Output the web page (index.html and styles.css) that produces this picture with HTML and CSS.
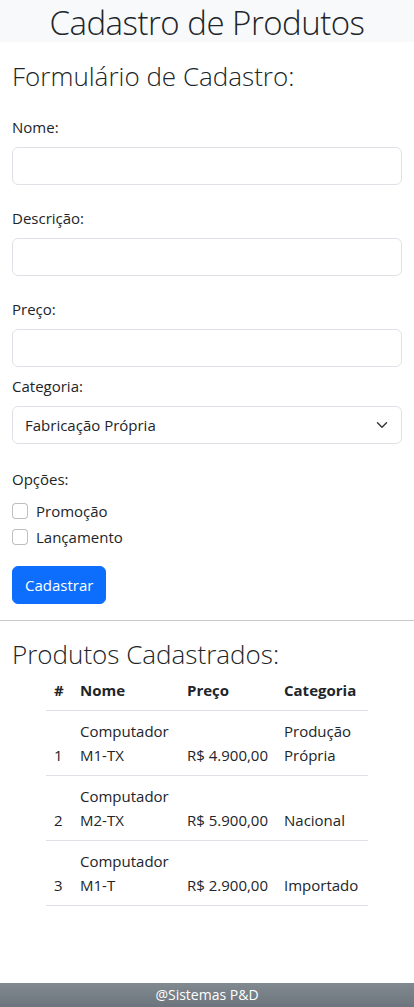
FILE: index.html
```html
<!DOCTYPE html>
<html lang="pt-BR">
<head>
<meta charset="utf-8">
<meta name="viewport" content="width=device-width, initial-scale=1">
<title>Cadastro de Produtos</title>
<link rel="stylesheet" href="styles.css">
</head>
<body>
<header class="topbar">
  <h1 class="title">Cadastro de Produtos</h1>
</header>

<main class="content">
  <h3 class="section-title form-title">Formulário de Cadastro:</h3>
  <form class="form">
    <div class="field">
      <label class="field-label" for="nome">Nome:</label>
      <input class="field-input" id="nome" type="text">
    </div>
    <div class="field">
      <label class="field-label" for="descricao">Descrição:</label>
      <input class="field-input" id="descricao" type="text">
    </div>
    <div class="field field-tight">
      <label class="field-label" for="preco">Preço:</label>
      <input class="field-input" id="preco" type="text">
    </div>
    <div class="field field-select">
      <label class="field-label" for="categoria">Categoria:</label>
      <div class="select-wrap">
        <select class="field-input select" id="categoria">
          <option>Fabricação Própria</option>
          <option>Nacional</option>
          <option>Importado</option>
        </select>
        <svg class="select-arrow" viewBox="0 0 16 16" aria-hidden="true"><path d="m2 5 6 6 6-6" fill="none" stroke="#343a40" stroke-width="2" stroke-linecap="round" stroke-linejoin="round"/></svg>
      </div>
    </div>
    <div class="options">
      <div class="field-label">Opções:</div>
      <label class="check"><input class="check-box" type="checkbox"><span>Promoção</span></label>
      <label class="check"><input class="check-box" type="checkbox"><span>Lançamento</span></label>
    </div>
    <button class="submit" type="button">Cadastrar</button>
  </form>
</main>

<hr class="divider">

<section class="content list">
  <h3 class="section-title list-title">Produtos Cadastrados:</h3>
  <table class="products">
    <colgroup>
      <col class="col-num">
      <col class="col-name">
      <col class="col-price">
      <col class="col-cat">
    </colgroup>
    <thead>
      <tr><th>#</th><th>Nome</th><th>Preço</th><th>Categoria</th></tr>
    </thead>
    <tbody>
      <tr><td>1</td><td>Computador M1-TX</td><td class="price">R$ 4.900,00</td><td>Produção Própria</td></tr>
      <tr><td>2</td><td>Computador M2-TX</td><td class="price">R$ 5.900,00</td><td>Nacional</td></tr>
      <tr><td>3</td><td>Computador M1-T</td><td class="price">R$ 2.900,00</td><td>Importado</td></tr>
    </tbody>
  </table>
</section>

<footer class="footer">@Sistemas P&amp;D</footer>
</body>
</html>
```

FILE: styles.css
```css
* { box-sizing: border-box; }

html, body { margin: 0; padding: 0; }

body {
  font-family: "Open Sans", "Noto Sans", sans-serif;
  font-size: 15px;
  line-height: 24px;
  color: #212529;
  background: #fff;
  min-height: 100vh;
  display: flex;
  flex-direction: column;
}

.topbar {
  background: #f8f9fa;
  height: 42px;
  padding-top: 4px;
}

.title {
  margin: 0;
  font-size: 33px;
  font-weight: 300;
  letter-spacing: -0.5px;
  line-height: 38px;
  text-align: center;
}

.content { padding: 0 12px; }

.section-title {
  font-size: 26px;
  font-weight: 300;
  line-height: 32px;
}

.form-title { margin: 18px 0 23px; }

.form {
  display: flex;
  flex-direction: column;
}

.field {
  display: flex;
  flex-direction: column;
  margin-bottom: 21px;
}

.field-tight { margin-bottom: 7px; }
.field-select { margin-bottom: 23px; }

.field-label {
  display: block;
  margin-bottom: 8px;
}

.field-input {
  display: block;
  width: 100%;
  height: 38px;
  padding: 6px 12px;
  font: inherit;
  color: inherit;
  background: #fff;
  border: 1px solid #dee2e6;
  border-radius: 6px;
  appearance: none;
  -webkit-appearance: none;
  outline: none;
}

.select { padding-right: 36px; }

.select-wrap { position: relative; }

.select-arrow {
  position: absolute;
  right: 12px;
  top: 50%;
  width: 16px;
  height: 12px;
  margin-top: -6px;
  pointer-events: none;
}

.options {
  display: flex;
  flex-direction: column;
}

.check {
  display: flex;
  align-items: flex-start;
  gap: 8px;
  min-height: 24px;
  margin-bottom: 2px;
}

.check-box {
  appearance: none;
  -webkit-appearance: none;
  flex: none;
  width: 16px;
  height: 16px;
  margin: 4px 0 0;
  background: #fff;
  border: 1px solid rgba(0, 0, 0, 0.25);
  border-radius: 4px;
}

.submit {
  align-self: flex-start;
  margin-top: 15px;
  height: 38px;
  padding: 6px 12px;
  font: inherit;
  color: #fff;
  background: #0d6efd;
  border: 1px solid #0d6efd;
  border-radius: 6px;
}

.divider {
  margin: 16px 0 0;
  border: 0;
  border-top: 1px solid #212529;
  opacity: 0.25;
  width: 100%;
}

.list-title { margin: 17px 0 0; }

.products {
  width: 322px;
  margin: 0 auto;
  border-collapse: collapse;
  table-layout: fixed;
}

.col-num { width: 26px; }
.col-name { width: 107px; }
.col-price { width: 97px; }
.col-cat { width: 92px; }

.products th,
.products td {
  padding: 8px;
  text-align: left;
  vertical-align: bottom;
  border-bottom: 1px solid #dee2e6;
}

.products th { font-weight: 700; }

.price { white-space: nowrap; }

.footer {
  margin-top: auto;
  height: 24px;
  font-size: 14px;
  line-height: 24px;
  text-align: center;
  color: #fff;
  background: #6c757d linear-gradient(180deg, rgba(255, 255, 255, 0.15), rgba(255, 255, 255, 0));
}
```
